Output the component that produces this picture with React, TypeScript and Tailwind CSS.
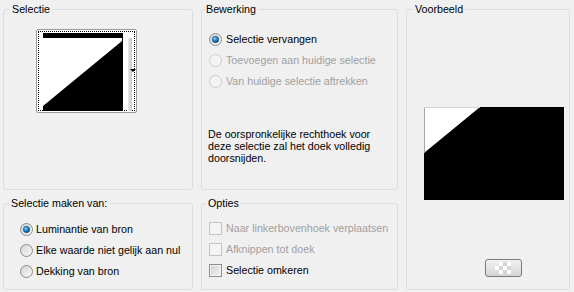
import React from 'react';

type RadioState = 'checked' | 'unchecked' | 'disabled';

function Radio({ state }: { state: RadioState }) {
  const id = React.useId().replace(/:/g, '');
  const disabled = state === 'disabled';
  return (
    <svg width="13" height="13" viewBox="0 0 13 13" className="shrink-0">
      <defs>
        <linearGradient id={`f${id}`} x1="0" y1="0" x2="1" y2="1">
          <stop offset="0" stopColor={disabled ? '#f4f4f4' : '#d2d2d2'} />
          <stop offset="1" stopColor={disabled ? '#f4f4f4' : '#fbfbfb'} />
        </linearGradient>
        <radialGradient id={`d${id}`} cx="0.4" cy="0.35" r="0.7">
          <stop offset="0" stopColor="#8fd3ff" />
          <stop offset="0.5" stopColor="#1b85d0" />
          <stop offset="1" stopColor="#0a3f73" />
        </radialGradient>
      </defs>
      <circle cx="6.5" cy="6.5" r="6" fill={`url(#f${id})`} stroke={disabled ? '#cbcbcb' : '#8a8a8a'} />
      {state === 'checked' && <circle cx="6.5" cy="6.5" r="3.2" fill={`url(#d${id})`} stroke="#154a7a" strokeWidth="0.6" />}
    </svg>
  );
}

function Checkbox({ disabled }: { disabled?: boolean }) {
  return (
    <span
      className={
        disabled
          ? 'w-[13px] h-[13px] shrink-0 border border-[#c4c4c4] bg-[#f4f4f4]'
          : 'w-[13px] h-[13px] shrink-0 border border-[#8e8f8f] bg-gradient-to-br from-[#cfcfcf] to-[#f6f6f6] shadow-[inset_0_0_0_1px_#f4f4f4]'
      }
    />
  );
}

function Group({
  title,
  className,
  legendClass,
  children,
}: {
  title: string;
  className?: string;
  legendClass?: string;
  children: React.ReactNode;
}) {
  return (
    <fieldset className={`m-0 p-0 min-w-0 border border-[#d5dfe5] rounded-[3px] ${className ?? ''}`}>
      <legend className={`px-[2px] text-[10.7px] leading-[13px] text-black ${legendClass ?? 'ml-[6px]'}`}>{title}</legend>
      {children}
    </fieldset>
  );
}

function Thumbnail() {
  return (
    <div className="ml-[32px] mt-[13px] w-[101px] h-[84px] rounded-[2px] border border-[#9a9a9a] bg-white p-px">
      <div className="w-full h-full border border-dotted border-black flex pl-[4px] pt-[1px]">
        <svg width="80" height="78" viewBox="0 0 80 78" className="shrink-0">
          <rect width="80" height="78" fill="#000" />
          <polygon points="0,5 79,5 79,8 0,73" fill="#fff" />
        </svg>
        <div className="ml-[5px] w-[4px] mt-[5px] h-[73px] bg-gradient-to-r from-[#e4e4e4] to-[#c9c9c9]" />
        <div className="relative">
          <span className="absolute left-[-2px] top-[36px] w-0 h-0 border-l-[3px] border-r-[3px] border-t-[3px] border-l-transparent border-r-transparent border-t-black" />
        </div>
      </div>
    </div>
  );
}

export default function App() {
  return (
    <div
      className="w-[574px] h-[292px] bg-[#f0f0f0] pt-[3px] pl-[3px] text-[10.7px] text-black overflow-hidden"
      style={{ fontFamily: '"Liberation Sans", Arial, sans-serif' }}
    >
      <div className="grid grid-cols-[190px_197px_164px] grid-rows-[187px_93px] gap-x-[8px] gap-y-[7px]">
        <Group title="Selectie" className="col-start-1 row-start-1">
          <Thumbnail />
        </Group>

        <Group title="Bewerking" className="col-start-2 row-start-1" legendClass="ml-[2px]">
          <div className="mt-[13px] ml-[7px] flex flex-col">
            <div className="h-[21px] flex items-center gap-[4px]">
              <Radio state="checked" />
              <span>Selectie vervangen</span>
            </div>
            <div className="h-[21px] flex items-center gap-[4px] text-[#a0a0a0]">
              <Radio state="disabled" />
              <span>Toevoegen aan huidige selectie</span>
            </div>
            <div className="h-[21px] flex items-center gap-[4px] text-[#a0a0a0]">
              <Radio state="disabled" />
              <span>Van huidige selectie aftrekken</span>
            </div>
          </div>
          <p className="mt-[36px] ml-[6px] leading-[12px]">
            De oorspronkelijke rechthoek voor
            <br />
            deze selectie zal het doek volledig
            <br />
            doorsnijden.
          </p>
        </Group>

        <Group title="Voorbeeld" className="col-start-3 row-start-1 row-span-2">
          <div className="mt-[91px] ml-[17px]">
            <svg width="140" height="93" viewBox="0 0 140 93">
              <rect width="140" height="93" fill="#000" />
              <polygon points="0,0 56,0 0,46" fill="#fff" />
              <line x1="0.5" y1="0" x2="0.5" y2="46" stroke="#a8a8a8" />
              <line x1="0" y1="0.5" x2="56" y2="0.5" stroke="#d0d0d0" />
            </svg>
          </div>
          <div className="mt-[59px] ml-[78px] w-[37px] h-[18px] rounded-[3px] border border-[#7a7a7a] bg-gradient-to-b from-[#f3f3f3] to-[#d4d4d4] flex items-center justify-center">
            <svg width="18" height="12" viewBox="0 0 18 12">
              <rect x="0" y="4" width="4" height="4" fill="#fff" />
              <rect x="4" y="0" width="4" height="4" fill="#fff" />
              <rect x="4" y="8" width="4" height="4" fill="#fff" />
              <rect x="8" y="4" width="4" height="4" fill="#fff" />
              <rect x="12" y="0" width="4" height="4" fill="#fff" />
              <rect x="12" y="8" width="4" height="4" fill="#fff" />
              <rect x="8" y="0" width="4" height="4" fill="#d6d6d6" />
              <rect x="8" y="8" width="4" height="4" fill="#d6d6d6" />
              <rect x="4" y="4" width="4" height="4" fill="#d6d6d6" />
              <rect x="12" y="4" width="4" height="4" fill="#d6d6d6" />
            </svg>
          </div>
        </Group>

        <Group title="Selectie maken van:" className="col-start-1 row-start-2" legendClass="ml-[5px]">
          <div className="mt-[9px] ml-[16px] flex flex-col">
            <div className="h-[21px] flex items-center gap-[3px]">
              <Radio state="checked" />
              <span>Luminantie van bron</span>
            </div>
            <div className="h-[21px] flex items-center gap-[3px]">
              <Radio state="unchecked" />
              <span>Elke waarde niet gelijk aan nul</span>
            </div>
            <div className="h-[21px] flex items-center gap-[3px]">
              <Radio state="unchecked" />
              <span>Dekking van bron</span>
            </div>
          </div>
        </Group>

        <Group title="Opties" className="col-start-2 row-start-2" legendClass="ml-[4px]">
          <div className="mt-[8px] ml-[7px] flex flex-col">
            <div className="h-[21px] flex items-center gap-[4px] text-[#a0a0a0]">
              <Checkbox disabled />
              <span>Naar linkerbovenhoek verplaatsen</span>
            </div>
            <div className="h-[21px] flex items-center gap-[4px] text-[#a0a0a0]">
              <Checkbox disabled />
              <span>Afknippen tot doek</span>
            </div>
            <div className="h-[21px] flex items-center gap-[4px]">
              <Checkbox />
              <span>Selectie omkeren</span>
            </div>
          </div>
        </Group>
      </div>
    </div>
  );
}
